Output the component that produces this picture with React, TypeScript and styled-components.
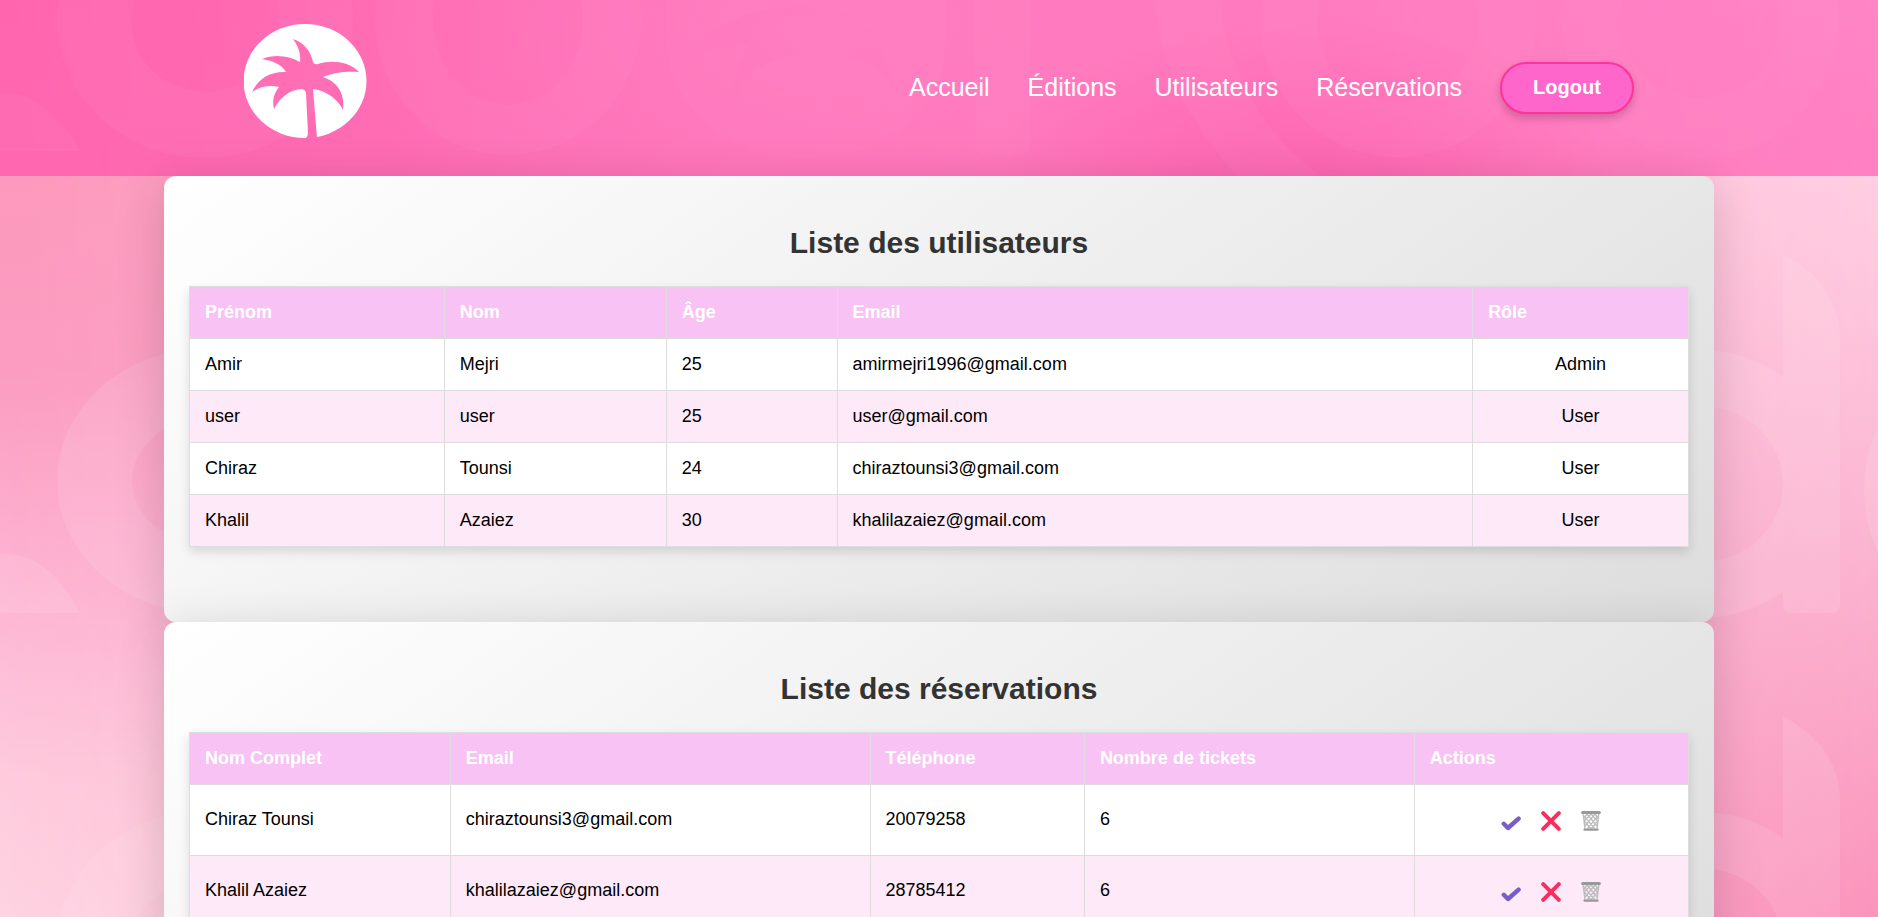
import React from "react";
import styled, { createGlobalStyle } from "styled-components";

const GlobalStyle = createGlobalStyle`
  * { box-sizing: border-box; }
  body {
    margin: 0;
    font-family: Arial, "Liberation Sans", sans-serif;
    background: #fba6c8;
  }
`;

const Page = styled.div`
  position: relative;
  height: 100vh;
  overflow: hidden;
`;

const Backdrop = styled.svg`
  position: absolute;
  inset: 0;
  z-index: -1;
  width: 100%;
  height: 100%;
`;

const Header = styled.header`
  display: flex;
  justify-content: center;
  height: 176px;
  background: rgba(255, 51, 163, 0.5);
`;

const HeaderInner = styled.div`
  display: flex;
  justify-content: space-between;
  width: 74%;
  padding-top: 24px;
`;

const Logo = styled.svg`
  width: 123px;
  height: 114px;
`;

const Nav = styled.nav`
  display: flex;
  align-items: center;
  gap: 38px;
  height: 128px;
`;

const NavLink = styled.a`
  padding-bottom: 2px;
  color: #fff;
  font-size: 25px;
  line-height: 28px;
  text-decoration: none;
`;

const LogoutButton = styled.button`
  height: 52px;
  padding: 0 31px 2px;
  border: 2px solid #ff3399;
  border-radius: 26px;
  background: #ff66cc;
  box-shadow: 0 4px 8px rgba(0, 0, 0, 0.2);
  color: #fff;
  font: bold 20px Arial, "Liberation Sans", sans-serif;
`;

const Main = styled.main`
  display: flex;
  flex-direction: column;
  align-items: center;
`;

const Panel = styled.section`
  width: 100%;
  max-width: 1550px;
  padding: 47px 25px 75px;
  border-radius: 12px;
  background: linear-gradient(145deg, #ffffff, #dddddd);
  box-shadow: 0 10px 50px rgba(0, 0, 0, 0.16);
`;

const Title = styled.h2`
  margin: 0 0 23px;
  color: #333;
  font-size: 30px;
  line-height: 40px;
  text-align: center;
`;

const Table = styled.table`
  width: 100%;
  table-layout: fixed;
  border-collapse: collapse;
  background: #fff;
  box-shadow: 0 5px 10px rgba(0, 0, 0, 0.12);
  font-size: 18px;
  line-height: 20px;
`;

const Col = styled.col<{ $width: number }>`
  width: ${({ $width }) => $width}%;
`;

const HeadCell = styled.th`
  height: 52px;
  padding: 0 15px 2px;
  border: 1px solid #ddd;
  background: #f8c3f4;
  color: #fff;
  text-align: left;
`;

const Row = styled.tr<{ $tall?: boolean }>`
  height: ${({ $tall }) => ($tall ? 71 : 52)}px;
  &:nth-child(even) { background: #fee9f9; }
`;

const Cell = styled.td<{ $center?: boolean }>`
  padding: 0 15px 2px;
  border: 1px solid #ddd;
  color: #000;
  text-align: ${({ $center }) => ($center ? "center" : "left")};
`;

const Actions = styled.div`
  display: flex;
  justify-content: center;
  gap: 20px;
  padding-top: 4px;
`;

const IconButton = styled.button`
  display: flex;
  width: 20px;
  height: 20px;
  padding: 0;
  border: 0;
  background: none;
`;

const users = [
  ["Amir", "Mejri", "25", "amirmejri1996@gmail.com", "Admin"],
  ["user", "user", "25", "user@gmail.com", "User"],
  ["Chiraz", "Tounsi", "24", "chiraztounsi3@gmail.com", "User"],
  ["Khalil", "Azaiez", "30", "khalilazaiez@gmail.com", "User"],
];

const bookings = [
  ["Chiraz Tounsi", "chiraztounsi3@gmail.com", "20079258", "6"],
  ["Khalil Azaiez", "khalilazaiez@gmail.com", "28785412", "6"],
];

const CheckIcon = () => (
  <svg width="20" height="20" viewBox="0 0 20 20" fill="none" stroke="#7a5cc8" strokeWidth="4.400" strokeLinecap="round" strokeLinejoin="round">
    <path d="M2.800 12.800 L7 17 L17.600 7.600" />
  </svg>
);

const CrossIcon = () => (
  <svg width="20" height="20" viewBox="0 0 20 20" fill="none" stroke="#fb2c5e" strokeWidth="4" strokeLinecap="round">
    <path d="M2.200 2.200 L17.800 17.800 M17.800 2.200 L2.200 17.800" />
  </svg>
);

const BinIcon = () => (
  <svg width="20" height="20" viewBox="0 0 20 20" fill="none" stroke="#bcbcbc" strokeWidth="1.300">
    <path d="M2 2 L4 18 M18 2 L16 18 M6 3 L16 15 M10 3 L16.600 10 M14 3 L17 7 M3 5 L14 18 M3.400 10 L10 18 M14 3 L4 15 M10 3 L3.200 10 M6 3 L3 7 M17 5 L6 18 M16.600 10 L10 18" />
    <path d="M1.600 1.600 H18.400" stroke="#999" strokeWidth="3" strokeLinecap="round" />
    <path d="M3.600 18.600 H16.400" stroke="#999" strokeWidth="2.400" strokeLinecap="round" />
  </svg>
);

const PalmLogo = () => (
  <Logo viewBox="0 0 123 114" role="img" aria-label="Palmier">
    <defs>
      <mask id="palm">
        <rect width="123" height="114" fill="#fff" />
        <path
          fill="#000"
          d="M49 15 C60 18 67 28 69 38 Q70 41 74 40 C87 36 104 37 115 48 C103 47 90 48 79 53 C94 58 101 70 99 86 C94 76 84 67 69 65 L73 114 H62 Q64 112 64 109 L62 69 Q61 65 57 65 C46 66 36 73 30 85 C28 76 30 69 35 63 C26 61 17 62 8 68 C14 55 26 47 42 48 C37 39 27 37 18 35 C29 30 45 31 56 38 C57 29 54 22 49 15 Z"
        />
      </mask>
    </defs>
    <ellipse cx="61" cy="57" rx="61.500" ry="57" fill="#fff" mask="url(#palm)" />
  </Logo>
);

/* Rounded ring: an ellipse with an elliptical hole, given by centre and the two radii pairs. */
const ring = (cx: number, cy: number, rx: number, ry: number, hx: number, hy: number) =>
  `M${cx - rx} ${cy} a${rx} ${ry} 0 1 0 ${rx * 2} 0 a${rx} ${ry} 0 1 0 ${-rx * 2} 0 Z ` +
  `M${cx - hx} ${cy} a${hx} ${hy} 0 1 0 ${hx * 2} 0 a${hx} ${hy} 0 1 0 ${-hx * 2} 0 Z`;

export default function App() {
  return (
    <>
      <GlobalStyle />
      <Page>
        <Backdrop viewBox="0 0 1878 917" preserveAspectRatio="none" aria-hidden="true">
          <defs>
            <linearGradient id="leftWash" x1="0" y1="0" x2="0" y2="1">
              <stop offset="0" stopColor="#ff97b9" />
              <stop offset="0.400" stopColor="#fb9cc0" />
              <stop offset="0.600" stopColor="#fdb0d0" />
              <stop offset="0.850" stopColor="#fecbdd" />
              <stop offset="1" stopColor="#fed3e2" />
            </linearGradient>
            <linearGradient id="rightWash" x1="0" y1="0" x2="0" y2="1">
              <stop offset="0" stopColor="#ffd6ea" />
              <stop offset="0.250" stopColor="#ffcbdf" />
              <stop offset="0.600" stopColor="#fbb4d0" />
              <stop offset="1" stopColor="#fb94bc" />
            </linearGradient>
            <linearGradient id="fade" x1="0" y1="0" x2="1" y2="0">
              <stop offset="0" stopColor="#000" />
              <stop offset="1" stopColor="#fff" />
            </linearGradient>
            <radialGradient id="glow">
              <stop offset="0" stopColor="#ffd0e6" stopOpacity="0.700" />
              <stop offset="1" stopColor="#ffd0e6" stopOpacity="0" />
            </radialGradient>
            <radialGradient id="shade">
              <stop offset="0" stopColor="#f98bb8" stopOpacity="0.900" />
              <stop offset="1" stopColor="#f98bb8" stopOpacity="0" />
            </radialGradient>
            <mask id="across">
              <rect width="1878" height="917" fill="url(#fade)" />
            </mask>
            <clipPath id="beforeStem">
              <rect width="1783" height="917" />
            </clipPath>
          </defs>
          <rect width="1878" height="917" fill="url(#leftWash)" />
          <rect width="1878" height="917" fill="url(#rightWash)" mask="url(#across)" />
          <ellipse cx="820" cy="30" rx="480" ry="280" fill="url(#glow)" />
          <ellipse cx="1300" cy="220" rx="330" ry="200" fill="url(#shade)" />
          <g fill="#fff" fillOpacity="0.100" fillRule="evenodd">
            <path d={ring(205, 20, 148, 138, 74, 72)} />
            <path d={ring(508, 20, 133, 135, 75, 85)} />
            <path d="M667 0 H945 V40 C945 110 890 157 806 157 C720 157 667 100 667 40 Z M686 60 C710 20 760 6 806 6 C850 6 885 30 893 86 C880 66 850 54 820 54 C770 54 745 70 735 100 C733 76 740 58 748 46 C722 42 700 50 686 60 Z" fillOpacity="0.070" />
            <path d="M974 0 H1030 V145 Q1030 155 1018 155 H988 Q976 155 976 145 Z" />
            <path d="M1155 0 H1220 Q1232 110 1320 176 H1237 Q1160 90 1155 0 Z" />
            <path d={ring(1398, 20, 138, 137, 81, 82)} />
            <path d={ring(1700, 20, 138, 137, 80, 78)} />
            <path d={ring(205, 481, 148, 132, 73, 62)} />
            <path d="M0 554 Q46 550 80 613 H0 Z" />
            <path d="M0 93 Q46 90 80 151 H0 Z" />
            <path d={ring(205, 943, 148, 132, 73, 62)} fillOpacity="0.080" />
            <g clipPath="url(#beforeStem)">
              <path d={ring(1700, 484, 140, 134, 83, 78)} />
              <path d={ring(1700, 946, 140, 134, 83, 78)} />
            </g>
            <path d="M1783 254 Q1840 285 1840 340 V604 Q1840 613 1830 613 H1792 Q1783 613 1783 604 Z" />
            <path d="M1783 716 Q1840 748 1840 800 V917 H1783 Z" />
            <ellipse cx="1960" cy="490" rx="96" ry="120" />
          </g>
        </Backdrop>
        <Header>
          <HeaderInner>
            <PalmLogo />
            <Nav>
              <NavLink href="#accueil">Accueil</NavLink>
              <NavLink href="#editions">Éditions</NavLink>
              <NavLink href="#utilisateurs">Utilisateurs</NavLink>
              <NavLink href="#reservations">Réservations</NavLink>
              <LogoutButton type="button">Logout</LogoutButton>
            </Nav>
          </HeaderInner>
        </Header>
        <Main>
          <Panel id="utilisateurs">
            <Title>Liste des utilisateurs</Title>
            <Table>
              <colgroup>
                {[17, 14.8, 11.4, 42.4, 14.4].map((width, i) => (
                  <Col key={i} $width={width} />
                ))}
              </colgroup>
              <thead>
                <tr>
                  {["Prénom", "Nom", "Âge", "Email", "Rôle"].map((label) => (
                    <HeadCell key={label} scope="col">{label}</HeadCell>
                  ))}
                </tr>
              </thead>
              <tbody>
                {users.map((user) => (
                  <Row key={user[3]}>
                    {user.map((value, i) => (
                      <Cell key={i} $center={i === 4}>{value}</Cell>
                    ))}
                  </Row>
                ))}
              </tbody>
            </Table>
          </Panel>
          <Panel id="reservations">
            <Title>Liste des réservations</Title>
            <Table>
              <colgroup>
                {[17.4, 28, 14.3, 22, 18.3].map((width, i) => (
                  <Col key={i} $width={width} />
                ))}
              </colgroup>
              <thead>
                <tr>
                  {["Nom Complet", "Email", "Téléphone", "Nombre de tickets", "Actions"].map((label) => (
                    <HeadCell key={label} scope="col">{label}</HeadCell>
                  ))}
                </tr>
              </thead>
              <tbody>
                {bookings.map((booking) => (
                  <Row key={booking[2]} $tall>
                    {booking.map((value, i) => (
                      <Cell key={i}>{value}</Cell>
                    ))}
                    <Cell $center>
                      <Actions>
                        <IconButton type="button" aria-label="Accepter"><CheckIcon /></IconButton>
                        <IconButton type="button" aria-label="Refuser"><CrossIcon /></IconButton>
                        <IconButton type="button" aria-label="Supprimer"><BinIcon /></IconButton>
                      </Actions>
                    </Cell>
                  </Row>
                ))}
              </tbody>
            </Table>
          </Panel>
        </Main>
      </Page>
    </>
  );
}
